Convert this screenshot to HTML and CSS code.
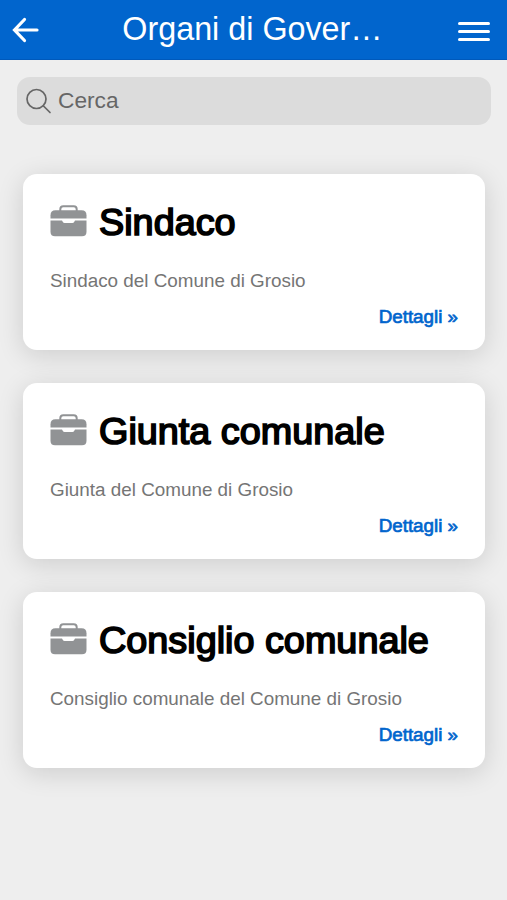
FILE: index.html
```html
<!DOCTYPE html>
<html lang="it">
<head>
<meta charset="utf-8">
<meta name="viewport" content="width=device-width, initial-scale=1">
<title>Organi di Governo</title>
<link rel="stylesheet" href="styles.css">
</head>
<body>
<svg class="sprite" aria-hidden="true">
  <symbol id="briefcase" viewBox="0 0 36 32">
    <path d="M9.8 6V4.200Q9.800 1.200 12.800 1.200H23.200Q26.200 1.200 26.200 4.200V6" fill="none" stroke="currentColor" stroke-width="2"/>
    <path d="M5 5.300H31Q36 5.300 36 10.300V13.400H0V10.300Q0 5.300 5 5.300Z" fill="currentColor"/>
    <path d="M0 15.600H11.500L12.500 17.200Q13 18 14 18H22Q23 18 23.500 17.200L24.500 15.600H36V26.800Q36 31.300 31.500 31.300H4.500Q0 31.300 0 26.800Z" fill="currentColor"/>
  </symbol>
</svg>
<header class="topbar">
  <a class="back" href="#" aria-label="Indietro">
    <svg width="28" height="26" viewBox="0 0 28 26"><path d="M13.500 2.500L3.500 13L13.500 23.500M3.500 13H26" fill="none" stroke="currentColor" stroke-width="3.200" stroke-linecap="round" stroke-linejoin="miter"/></svg>
  </a>
  <h1 class="title">Organi di Gover…</h1>
  <a class="menu" href="#" aria-label="Menu"><span></span><span></span><span></span></a>
</header>
<main class="content">
  <div class="search">
    <svg width="26" height="26" viewBox="0 0 26 26"><g fill="none" stroke="currentColor" stroke-width="1.700" stroke-linecap="round"><circle cx="10.500" cy="11" r="9.500"/><path d="M17.500 18L24 24.500"/></g></svg>
    <span>Cerca</span>
  </div>
  <article class="card">
    <h2><svg class="icon"><use href="#briefcase"/></svg>Sindaco</h2>
    <p>Sindaco del Comune di Grosio</p>
    <a class="details" href="#">Dettagli »</a>
  </article>
  <article class="card">
    <h2><svg class="icon"><use href="#briefcase"/></svg>Giunta comunale</h2>
    <p>Giunta del Comune di Grosio</p>
    <a class="details" href="#">Dettagli »</a>
  </article>
  <article class="card">
    <h2><svg class="icon"><use href="#briefcase"/></svg>Consiglio comunale</h2>
    <p>Consiglio comunale del Comune di Grosio</p>
    <a class="details" href="#">Dettagli »</a>
  </article>
</main>
</body>
</html>
```
FILE: styles.css
```css
* { box-sizing: border-box; }

body {
  margin: 0;
  min-height: 900px;
  background: #eee;
  font-family: "Liberation Sans", Arial, sans-serif;
}

.sprite { display: none; }

.topbar {
  display: flex;
  align-items: center;
  justify-content: space-between;
  height: 60px;
  padding: 0 17px 0 11px;
  background: #0165cd;
  border-bottom: 1px solid #0059bb;
  color: #fff;
}

.back { display: flex; width: 36px; color: inherit; }

.title {
  margin: 0;
  font-size: 32.3px;
  line-height: 58px;
  padding-bottom: 1px;
  font-weight: 400;
}

.menu {
  display: flex;
  flex-direction: column;
  gap: 5px;
  width: 32px;
  margin-top: 3px;
}

.menu span {
  height: 3px;
  border-radius: 1.5px;
  background: #fff;
}

.content { padding: 17px 16px 0 17px; }

.search {
  display: flex;
  align-items: center;
  gap: 6px;
  height: 48px;
  margin-bottom: 49px;
  padding: 0 9px;
  border-radius: 13px;
  background: #dcdcdc;
  color: #666;
  font-size: 22.7px;
}

.search span { line-height: 46px; height: 48px; }

.card {
  height: 176px;
  margin: 0 6px 33px;
  padding: 24px 27px 0;
  border-radius: 14px;
  background: #fff;
  box-shadow: 0 5px 27px rgba(0, 0, 0, 0.14);
}

.card h2 {
  display: flex;
  gap: 12px;
  margin: 0;
  color: #000;
  font-size: 37.8px;
  line-height: 48px;
  font-weight: 400;
  -webkit-text-stroke: 1.7px #000;
}

.icon {
  width: 37px;
  height: 32px;
  margin-top: 7px;
  color: #919395;
  -webkit-text-stroke: 0;
}

.card p {
  margin: 23px 0 0;
  color: #757575;
  font-size: 18.85px;
  line-height: 24px;
}

.details {
  display: block;
  margin-top: 12px;
  color: #0165cd;
  font-size: 18.8px;
  line-height: 24px;
  text-align: right;
  text-decoration: none;
  -webkit-text-stroke: 0.7px #0165cd;
}
```
